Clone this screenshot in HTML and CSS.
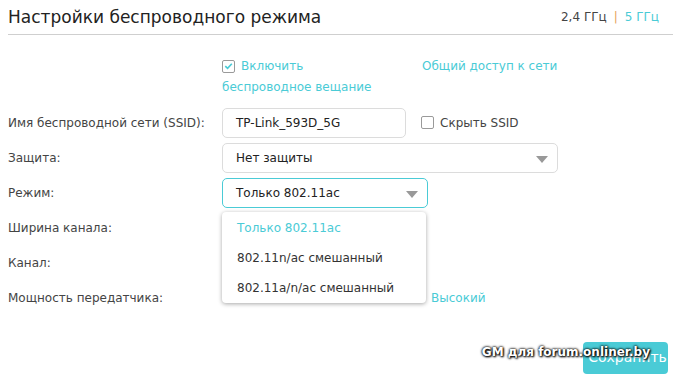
FILE: index.html
```html
<!DOCTYPE html>
<html lang="ru">
<head>
<meta charset="utf-8">
<title>Настройки беспроводного режима</title>
<link rel="stylesheet" href="styles.css">
</head>
<body>
<div class="page">
  <div class="head">
    <h1 class="title">Настройки беспроводного режима</h1>
    <div class="bands"><span class="band">2,4 ГГц</span><span class="sep">|</span><span class="band active">5 ГГц</span></div>
  </div>
  <div class="form">
    <div class="label first"></div>
    <div class="field enable-row">
      <div class="enable"><span class="check checked"><svg viewBox="0 0 12 12" width="12" height="12"><path d="M2.5 6.2 L5 8.6 L9.6 3.6" fill="none" stroke="#4acbd6" stroke-width="1.8"/></svg></span><span class="teal enable-text">Включить<br>беспроводное вещание</span></div>
      <span class="teal share">Общий доступ к сети</span>
    </div>

    <div class="label">Имя беспроводной сети (SSID):</div>
    <div class="field">
      <div class="input ssid">TP-Link_593D_5G</div>
      <span class="check hide-check"></span><span class="hide-text">Скрыть SSID</span>
    </div>

    <div class="label">Защита:</div>
    <div class="field">
      <div class="input select wide">Нет защиты<span class="arrow"></span></div>
    </div>

    <div class="label">Режим:</div>
    <div class="field mode-field">
      <div class="input select mode focus">Только 802.11ac<span class="arrow"></span></div>
      <ul class="menu">
        <li class="opt selected">Только 802.11ac</li>
        <li class="opt">802.11n/ac смешанный</li>
        <li class="opt">802.11a/n/ac смешанный</li>
      </ul>
    </div>

    <div class="label plain">Ширина канала:</div>
    <div class="field plain"></div>

    <div class="label plain">Канал:</div>
    <div class="field plain"></div>

    <div class="label plain">Мощность передатчика:</div>
    <div class="field plain"><span class="teal power">Высокий</span></div>
  </div>
  <div class="actions">
    <button class="save">Сохранить</button>
    <span class="watermark">GM для forum.onliner.by</span>
  </div>
</div>
</body>
</html>
```
FILE: styles.css
```css
* { box-sizing: border-box; }
html, body { margin: 0; padding: 0; background: #fff; }
body {
  font-family: "DejaVu Sans", Verdana, sans-serif;
  font-size: 12px;
  color: #333;
  width: 673px;
  height: 376px;
  overflow: hidden;
}
.page { padding: 0 0 0 8px; position: relative; height: 376px; }
.head {
  display: flex;
  align-items: center;
  justify-content: space-between;
  height: 35px;
  border-bottom: 1px solid #cfcfcf;
  padding-right: 14px;
  padding-bottom: 1px;
}
.title {
  margin: 0;
  font-family: "DejaVu Sans", sans-serif;
  font-weight: normal;
  font-size: 17px;
  color: #222;
}
.bands { font-size: 12px; color: #444; display: flex; gap: 7px; }
.sep { color: #e6a25a; }
.active { color: #4acbd6; }
.teal { color: #4acbd6; }

.form {
  display: grid;
  grid-template-columns: 214px 1fr;
  margin-top: 21px;
}
.label {
  display: flex;
  align-items: center;
  height: 35px;
  color: #444;
}
.field {
  display: flex;
  align-items: center;
  height: 35px;
  position: relative;
}
.label.first { height: 49px; }
.enable-row { height: 49px; align-items: flex-start; }
.enable { width: 200px; line-height: 21px; }
.enable .check { vertical-align: -2px; margin-right: 6px; }
.share { line-height: 21px; }

.check {
  width: 13px;
  height: 13px;
  border: 1px solid #9a9a9a;
  border-radius: 2px;
  display: inline-flex;
  align-items: center;
  justify-content: center;
  background: #fff;
}
.input {
  height: 30px;
  border: 1px solid #dcdcdc;
  border-radius: 5px;
  display: flex;
  align-items: center;
  padding-left: 13px;
  color: #222;
  position: relative;
}
.ssid { width: 184px; }
.hide-check { margin-left: 15px; margin-right: 6px; }
.hide-text { color: #444; }
.wide { width: 336px; }
.mode { width: 206px; }
.focus { border-color: #4acbd6; }
.arrow {
  position: absolute;
  right: 9px;
  top: 12px;
  width: 0;
  height: 0;
  border-left: 6px solid transparent;
  border-right: 6px solid transparent;
  border-top: 7px solid #999;
}
.menu {
  position: absolute;
  left: 0;
  top: 37px;
  width: 204px;
  margin: 0;
  padding: 0;
  list-style: none;
  background: #fff;
  border-radius: 4px;
  box-shadow: 0 1px 4px rgba(0,0,0,0.35);
  z-index: 2;
}
.opt { height: 30px; display: flex; align-items: center; padding-left: 15px; color: #333; }
.opt:first-child { height: 31px; }
.selected { color: #4acbd6; }
.power { padding-left: 209px; }

.actions { position: absolute; right: 5px; top: 342px; }
.save {
  width: 85px;
  height: 32px;
  border: none;
  border-radius: 4px;
  background: #4acbd6;
  color: #fff;
  font-family: "DejaVu Sans", sans-serif;
  font-size: 14px;
  padding: 0 0 2px 4px;
}
.watermark {
  position: absolute;
  right: 18px;
  top: 3px;
  white-space: nowrap;
  color: #fff;
  font-weight: bold;
  font-size: 12px;
  text-shadow: 0 0 2px #000, 0 0 3px #000, 1px 1px 2px #000;
}
```
